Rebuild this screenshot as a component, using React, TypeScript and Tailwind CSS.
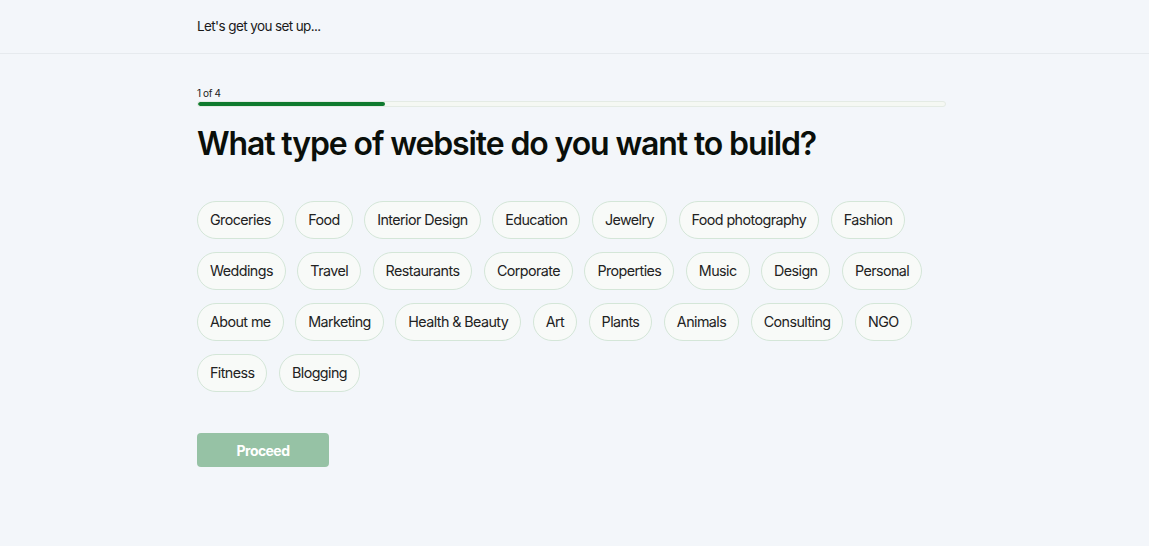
import React from "react";

const rows = [
  ["Groceries", "Food", "Interior Design", "Education", "Jewelry", "Food photography", "Fashion"],
  ["Weddings", "Travel", "Restaurants", "Corporate", "Properties", "Music", "Design", "Personal"],
  ["About me", "Marketing", "Health & Beauty", "Art", "Plants", "Animals", "Consulting", "NGO"],
  ["Fitness", "Blogging"],
];

export default function App() {
  return (
    <div className="min-h-[546px] w-full bg-[#f3f6fa] text-[#111] [font-family:Inter,'Noto_Sans',sans-serif]">
      <header className="h-[54px] border-b border-[#e6eaee] flex items-center">
        <div className="ml-[197px] text-[13.5px] tracking-[-0.045em] text-[#1a1a1a]">Let's get you set up...</div>
      </header>
      <main className="ml-[197px] w-[749px] pt-[33px]">
        <div className="text-[10px] leading-[12px] tracking-[-0.04em] text-[#222]">1 of 4</div>
        <div className="mt-[2px] h-[6px] rounded-full bg-[#f5f8f3] border border-[#e4ebe4] overflow-hidden">
          <div className="h-full w-[25%] bg-[#0f7a2e] rounded-full" />
        </div>
        <h1 className="mt-[17px] text-[32px] leading-[40px] font-semibold tracking-[-0.035em] text-[#0a0f0a]">
          What type of website do you want to build?
        </h1>
        <div className="mt-[37px] flex flex-col gap-y-[13px]">
          {rows.map((row, i) => (
            <div key={i} className="flex gap-x-[11.5px]">
              {row.map((t) => (
                <button
                  key={t}
                  className="h-[38px] px-[12px] rounded-full border border-[#d4e6d8] bg-[#f8faf8] text-[14.3px] tracking-[-0.04em] text-[#222]"
                >
                  {t}
                </button>
              ))}
            </div>
          ))}
        </div>
        <button className="mt-[41px] w-[132px] h-[34px] rounded-[4px] bg-[#96c2a5] text-white text-[14px] font-bold tracking-[-0.04em]">
          Proceed
        </button>
      </main>
    </div>
  );
}
